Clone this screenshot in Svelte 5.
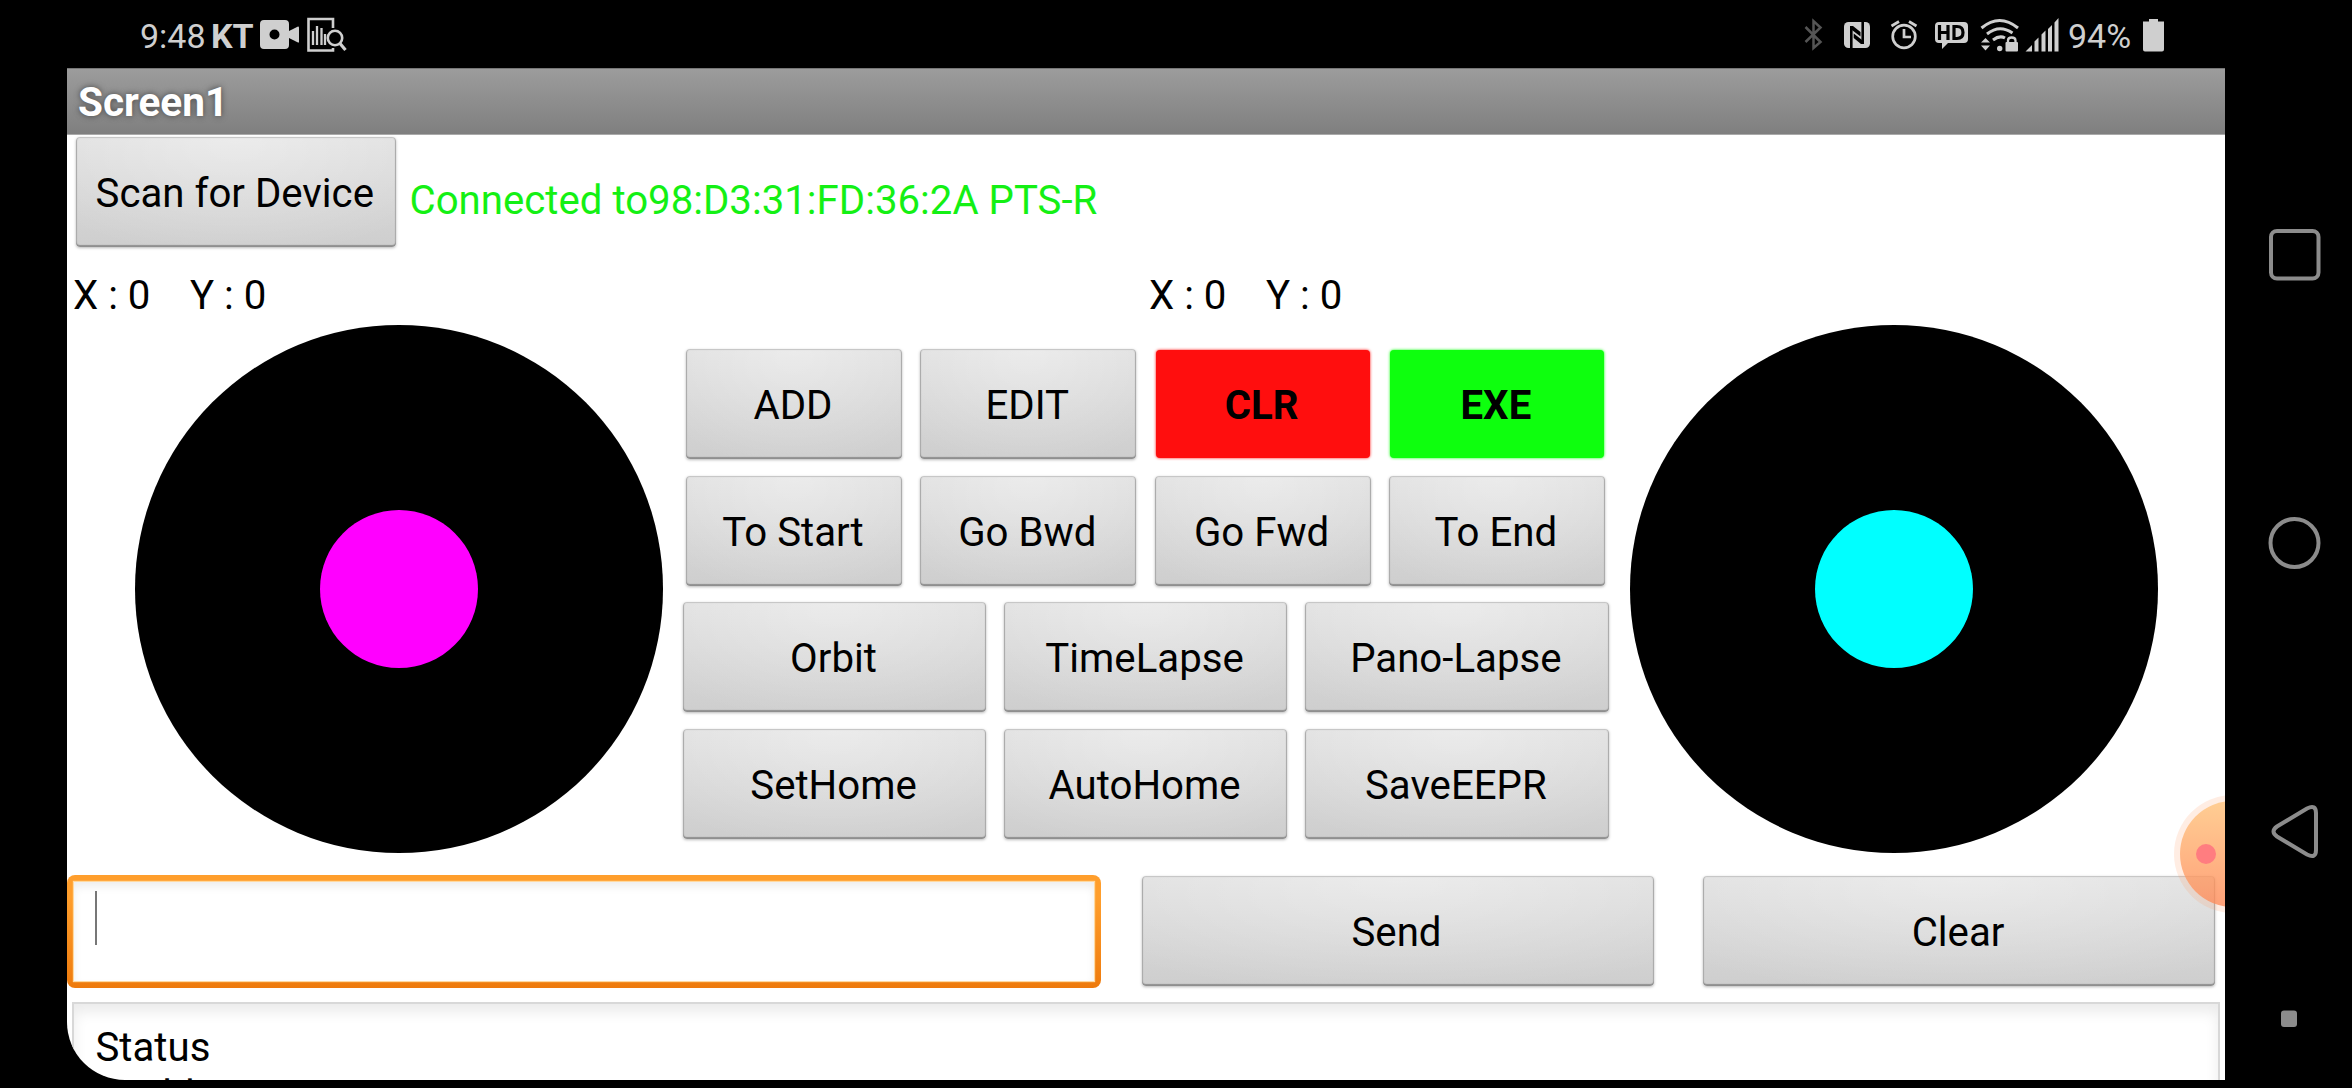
<script>
  const rowA = [
    [{ t: 'ADD' }, { t: 'EDIT' }, { t: 'CLR', c: 'red' }, { t: 'EXE', c: 'green' }],
    [{ t: 'To Start' }, { t: 'Go Bwd' }, { t: 'Go Fwd' }, { t: 'To End' }]
  ];
  const rowB = [
    ['Orbit', 'TimeLapse', 'Pano-Lapse'],
    ['SetHome', 'AutoHome', 'SaveEEPR']
  ];
</script>

<div class="phone">
  <header class="status">
    <span class="time">9:48</span>
    <b class="carrier">KT</b>
    <svg class="cam" width="39" height="30" viewBox="0 0 39 30">
      <path fill-rule="evenodd" d="M4 0H25Q29 0 29 4V11L38 6.500Q39 6 39 8V21.500Q39 23 38 22.500L29 18V25Q29 29 25 29H4Q0 29 0 25V4Q0 0 4 0ZM14.500 9.500A5 5 0 1 0 14.500 19.500A5 5 0 1 0 14.500 9.500Z" fill="#cfcfcf" />
    </svg>
    <svg class="chart" width="40" height="36" viewBox="0 0 40 36" fill="none" stroke="#cfcfcf">
      <path d="M26 11V2H1.500V33.500H26V31" stroke-width="2.600" />
      <path d="M6 28V14M10 28V9M14.500 28V11M18 28V17" stroke-width="2.300" />
      <circle cx="28" cy="21" r="7.200" stroke-width="2.600" />
      <path d="M33 26.500L38.500 33" stroke-width="3.200" />
    </svg>
    <svg class="sys" width="390" height="44" viewBox="1800 12 390 44" fill="none" stroke="#cfcfcf">
      <path d="M1805.500 27L1820.500 42L1813.500 48V21L1820.500 27.500L1805.500 42" stroke="#555" stroke-width="2.500" />
      <rect x="1844" y="22" width="26" height="26" rx="4.500" fill="#cfcfcf" stroke="none" />
      <path d="M1851.300 48V27M1862.700 22V43" stroke="#000" stroke-width="2.600" />
      <path d="M1850 26L1853 26L1860.500 32V36.500L1850 28.500ZM1864 44L1861 44L1853.700 38V33.500L1864 41.500Z" fill="#000" stroke="none" />
      <circle cx="1904" cy="36.500" r="11.300" stroke-width="2.700" />
      <path d="M1904 29V37H1911M1891.500 26L1899 21.500M1909 21.500L1916.500 26" stroke-width="2.700" />
      <path d="M1939 22H1964Q1968 22 1968 26V39Q1968 43 1964 43H1948L1942 49V43H1939Q1935 43 1935 39V26Q1935 22 1939 22Z" fill="#cfcfcf" stroke="none" />
      <path d="M1939.500 25V40M1948 25V40M1939.500 32.500H1948M1954 26.500H1957Q1963 26.500 1963 32.500T1957 38.500H1954Z" stroke="#000" stroke-width="3.200" />
      <path d="M1981.500 28Q1999.500 13 2018 28M1987 34Q1999.500 24 2012.500 33M1993 40Q1999.500 35 2005 38" stroke-width="3" />
      <circle cx="1999.700" cy="48.500" r="2.700" fill="#cfcfcf" stroke="none" />
      <path d="M1981 42.500L1985.500 38L1990 42.500ZM1981 45.500H1990L1985.500 50.500Z" fill="#cfcfcf" stroke="none" />
      <rect x="2005.500" y="42" width="12.500" height="9.500" rx="1" fill="#cfcfcf" stroke="none" />
      <path d="M2008 43V40.500Q2008 37.500 2011.700 37.500T2015.500 40.500V43" stroke-width="2.300" />
      <path d="M2025.500 51.500L2032 45V51.500ZM2034.500 51.500V41.500L2038.500 37.500V51.500ZM2041.500 51.500V34.500L2045.500 30.500V51.500ZM2048 51.500V29L2052 25V51.500ZM2054.500 51.500V22.500L2058.500 18V51.500Z" fill="#cfcfcf" stroke="none" />
      <path d="M2149 19H2158V21.500H2164V49.500Q2164 51.500 2162 51.500H2145Q2143 51.500 2143 49.500V21.500H2149Z" fill="#cfcfcf" stroke="none" />
    </svg>
    <span class="pct">94%</span>
  </header>

  <main class="screen">
    <div class="title">Screen1</div>
    <div class="connect">
      <button class="btn scan">Scan for Device</button>
      <span class="link">Connected to98:D3:31:FD:36:2A PTS-R</span>
    </div>
    <div class="coords">
      <span class="x">X : 0</span><span class="y">Y : 0</span>
      <span class="x">X : 0</span><span class="y">Y : 0</span>
    </div>
    <div class="control">
      <div class="stick"><div class="knob magenta"></div></div>
      <div class="pads">
        {#each rowA as row}
          <div class="four">
            {#each row as b}<button class="btn {b.c ?? ''}">{b.t}</button>{/each}
          </div>
        {/each}
        {#each rowB as row}
          <div class="three">
            {#each row as t}<button class="btn">{t}</button>{/each}
          </div>
        {/each}
      </div>
      <div class="stick"><div class="knob cyan"></div></div>
    </div>
    <div class="send">
      <div class="entry"><div class="inner"><i></i></div></div>
      <button class="btn">Send</button>
      <button class="btn">Clear</button>
    </div>
    <div class="log">Status<br />Enable</div>
    <div class="bubble"><div class="disc"><i></i></div></div>
  </main>

  <nav>
    <svg width="60" height="1020" viewBox="2264 68 60 1020" fill="none" stroke="#8c8c8c" stroke-width="4">
      <rect x="2271" y="231" width="47.500" height="47.500" rx="6" />
      <circle cx="2294.500" cy="543" r="24" />
      <path d="M2307 808.500Q2316 804 2316 813V850Q2316 859 2307 854.500L2277 836.500Q2270 831.500 2277 826.500Z" />
      <rect x="2281" y="1010.500" width="16" height="16.500" rx="3" fill="#8c8c8c" stroke="none" />
    </svg>
  </nav>
</div>

<style>
  :global(body) { margin: 0; background: #000; overflow: hidden; }
  .phone {
    width: 2352px; height: 1088px; background: #000; overflow: hidden;
    display: grid; grid-template: 68px 1012px / 2225px 127px;
    font: 40.200px/48px Roboto, sans-serif; color: #000;
  }
  .status { grid-column: 1 / 3; display: flex; align-items: flex-start; color: #cfcfcf; font-size: 34px; line-height: 40px; padding: 16px 0 0 140px; box-sizing: border-box; }
  .time { width: 71px; }
  .carrier { width: 49px; font-weight: 700; }
  .cam { margin-top: 4px; }
  .chart { margin: 1px 0 0 8px; }
  .sys { margin: -4px 0 0 1453px; }
  .pct { margin-left: -122px; }
  .screen {
    margin-left: 67px; background: #fff; height: 1012px; position: relative; overflow: hidden;
    border-bottom-left-radius: 58px; display: flex; flex-direction: column;
  }
  .title {
    height: 67px; box-sizing: border-box; padding: 9px 0 0 11px; flex: none;
    background: linear-gradient(#9c9c9c, #7f7f7f); border-top: 1px solid #777; border-bottom: 1px solid #aaa;
    color: #fff; font-weight: 700; text-shadow: 0 0 6px #444; font-size: 40.500px;
  }
  .connect { display: flex; height: 126px; padding: 2px 0 0 9px; box-sizing: border-box; flex: none; }
  .link { color: #14f014; margin: 40px 0 0 14px; white-space: nowrap; }
  .btn {
    border: 0; margin: 0; padding: 4px 2px 0 0; height: 110px; border-radius: 4px; box-sizing: border-box;
    font: inherit; color: #000; white-space: nowrap;
    background: radial-gradient(ellipse 75% 110% at 50% 0, rgba(255, 255, 255, .38), rgba(255, 255, 255, 0)), linear-gradient(#e0e0e0, #cecece);
    box-shadow: inset 0 -2px 1px #8f8f8f, inset 0 1px 1px #c4c4c4, inset 2px 0 1px -1px #aaa, inset -2px 0 1px -1px #aaa, 0 1px 3px rgba(0, 0, 0, .28);
  }
  .scan { width: 319.500px; }
  .coords { display: flex; height: 64px; padding: 11px 0 0 6px; box-sizing: border-box; flex: none; }
  .x { width: 117px; }
  .y { width: 960px; }
  .control { display: flex; height: 528px; flex: none; padding-left: 67.500px; }
  .stick { width: 528px; height: 528px; border-radius: 50%; background: #000; display: grid; place-items: center; flex: none; }
  .knob { width: 158px; height: 158px; border-radius: 50%; }
  .magenta { background: #f0f; }
  .cyan { background: #0ff; }
  .pads { width: 967.500px; padding: 24px 0 0 20.500px; box-sizing: border-box; display: flex; flex-direction: column; gap: 16.500px; }
  .four { display: grid; grid-template-columns: repeat(4, 216px); gap: 18.300px; padding-left: 3px; }
  .three { display: grid; grid-template-columns: 303px 282.500px 303.500px; gap: 18.300px; }
  .red, .green { font-weight: 700; margin: 1px 1px 1px; height: 108px; }
  .red { background: #ff0e0e; box-shadow: 0 0 3px #ff0e0e; }
  .green { background: #0eff0e; box-shadow: 0 0 3px #0eff0e; }
  .send { display: grid; grid-template-columns: 1034px 512px 512px; column-gap: 40.500px; margin-top: 22px; flex: none; }
  .send .btn { margin-top: 1px; }
  .send .btn:last-child { margin-left: 9px; margin-right: -9px; }
  .entry { height: 113px; padding: 7px; box-sizing: border-box; border-radius: 8px; background: linear-gradient(#ff9e2c 20%, #ee7a0c); }
  .inner { background: #fff; height: 99px; box-shadow: inset 0 5px 9px #eee, 0 0 1px 1px #ffd9a0; padding: 9px 0 0 21px; box-sizing: border-box; }
  .inner i { display: block; width: 2px; height: 54px; background: #777; }
  .log {
    margin: 14px 5px 0 5px; height: 100px; padding: 20px 0 0 21.500px; flex: none;
    border: 2px solid #d8d8d8; box-sizing: border-box; box-shadow: inset 0 8px 14px #ebebeb; white-space: nowrap;
  }
  .bubble { position: absolute; left: 2107px; top: 727px; width: 118px; height: 118px; border-radius: 50%; background: rgba(255, 150, 90, .17); display: grid; place-items: center; }
  .disc { width: 106px; height: 106px; border-radius: 50%; background: linear-gradient(rgba(255, 195, 120, .75), rgba(255, 135, 85, .75)); display: flex; align-items: center; }
  .disc i { width: 20px; height: 20px; border-radius: 50%; background: #ff7d80; margin-left: 16px; }
  nav { padding-left: 39px; }
  nav svg { display: block; }
</style>
